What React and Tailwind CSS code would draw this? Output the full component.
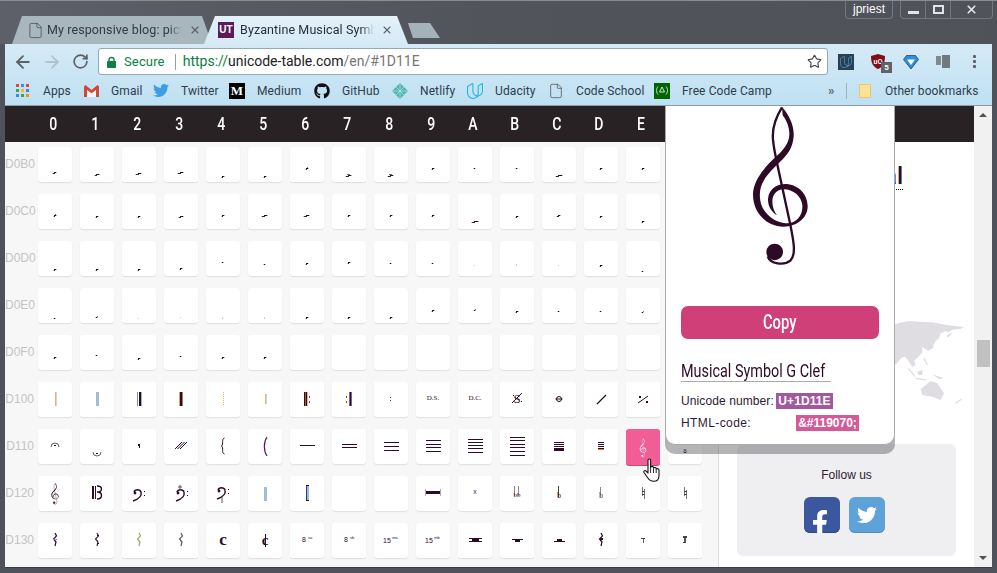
import React from 'react';
import { ArrowLeft, ArrowRight, RotateCw, Star, File, X } from 'lucide-react';
import { FaTwitter, FaGithub, FaFacebookF } from 'react-icons/fa';
import { SiUdacity } from 'react-icons/si';

const D = '#2d0b26';
const R = ({ x, y, w = 1, h = 1, c = D }) => <rect x={x} y={y} width={w} height={h} fill={c} shapeRendering="crispEdges" />;
const L = ({ d, w = 1, c = D, f = 'none' }) => <path d={d} stroke={c} strokeWidth={w} fill={f} />;
const T = ({ t, y = 19, s = 6, x = 17, b, serif = true, c = D }) => (
  <text x={x} y={y} textAnchor="middle" fontSize={s} fontWeight={b ? 700 : 400} fontFamily={serif ? '"Liberation Serif",serif' : '"Liberation Sans",sans-serif'} fill={c}>{t}</text>
);

function Clef({ color = D, x, y, width, height }) {
  return (
    <svg x={x} y={y} width={width} height={height} viewBox="380 14 200 490" className="block mx-auto">
      <path fill={color} d="M485 16C505 40 522 70 520 105C518 130 510 148 495 165C475 188 445 212 430 238C420 255 416 275 420 298C425 330 455 362 495 366C530 368 548 340 546 312C544 285 518 264 490 264C468 264 456 282 456 300C456 318 462 332 470 342C452 332 442 312 443 292C445 265 468 247 498 248C535 250 562 280 562 315C562 350 530 376 490 376C440 376 398 335 398 280C398 240 430 200 468 165C490 145 506 125 507 100C508 80 498 55 487 42L485 16Z" />
      <path fill="none" stroke={color} strokeWidth="7" d="M485 18C465 50 455 85 458 115C460 140 465 160 470 185L510 370C520 420 528 460 510 478C490 494 450 488 442 465" />
      <circle cx="463" cy="452" r="25" fill={color} />
    </svg>
  );
}

const dotRows = [
  [[25,5],[27,6],[26,7],[25,7],[29,3],[29,3],[21,4,3],[28,7,2],[28,7,2],[21,3],[21,2],[21,1],[28,8],[21,3],[21,3]],
  [[21,4,3],[22,3],[22,3],[22,6],[21,3],[21,7],[21,7],[21,3],[21,3],[21,4],[27,8],[22,3],[21,5],[22,3],[27,3]],
  [[28,3],[28,3],[28,4],[27,4],[21,2],[23,2],[22,3],[21,3],[22,2],[22,2],[24,2,1,1],[23,2,2,1],[24,2,1,1],[24,3],[30,2]],
  [[30,2],[29,2,2],[30,1,1,1],[29,1,1,1],[29,2,2,1],[29,2,2,1],[29,3],[29,3],[29,3],[22,3],[22,2,2],[23,3],[23,2],[23,2],[24,2,2]],
  [[22,3],[20,1],[23,3],[21,1],[22,3],[22,3]],
];

function Dot({ m }) {
  const [y, w0, h = 1, faint] = m;
  const w = w0 > 3 ? w0 - 2 : Math.max(1, w0 - 1);
  const x = Math.floor(17 - w / 2);
  if (faint) return <R x={x} y={y} w={w} h={h} c="#d9cdb8" />;
  const half = Math.ceil(w / 2);
  return (
    <>
      {w > 1 && <R x={x} y={y + 1} w={half} c="#3a2040" />}
      <R x={x + half - 1} y={y} w={w - half + 1} />
      {h > 1 && <R x={x + 1} y={y - 1} w={Math.max(1, w - 2)} c="#8a6a70" />}
      <R x={x - 1} y={y + (w > 1 ? 1 : 0)} c="#e8b898" />
      <R x={x + w} y={y} c="#9ab8ea" />
    </>
  );
}

const O = '#e9b36b', B = '#93bdea';
const g100 = [
  <><R x={17} y={10} h={14} c={O} /><R x={18} y={10} h={14} c="#c3d8ee" /></>,
  <><R x={16} y={10} h={14} c={B} /><R x={17} y={10} h={14} c="#c9b8a0" /><R x={18} y={10} h={14} c={B} /></>,
  <><R x={15} y={10} h={14} c="#8a8f6a" /><R x={17} y={10} w={2} h={14} /><R x={19} y={10} h={14} c="#8fb0e8" /></>,
  <><R x={15} y={10} h={14} c="#d9a878" /><R x={16} y={10} w={2} h={14} /><R x={18} y={10} h={14} c="#b07a50" /></>,
  <path d="M17.500 10V24" stroke={O} strokeDasharray="1 1" />,
  <><R x={17} y={12} h={10} c={O} /><R x={18} y={12} h={10} c="#c3d8ee" /></>,
  <><R x={14} y={10} h={14} /><R x={15} y={10} h={14} c="#9a5a3a" /><R x={16} y={10} h={14} /><R x={17} y={10} h={14} c={O} /><R x={19} y={14} h={2} c="#555" /><R x={19} y={19} h={2} c="#555" /></>,
  <><R x={14} y={14} h={2} c="#555" /><R x={14} y={19} h={2} c="#555" /><R x={17} y={10} h={14} c="#b4574a" /><R x={18} y={10} h={14} /><R x={19} y={10} h={14} c="#5a6ad0" /></>,
  <><R x={16} y={15} h={1} c="#555" /><R x={16} y={18} h={1} c="#555" /></>,
  <T t="D.S." y={18} s={7} />,
  <T t="D.C." y={18} s={7} />,
  <><T t="S" y={21} s={13} /><L d="M12 21L22 11" /><R x={13} y={13} c={D} /><R x={21} y={19} /></>,
  <><circle cx="17" cy="17" r="2.500" fill="none" stroke={D} /><L d="M13.500 17H20.500" /></>,
  <L d="M13 22L22 13" w={1.2} />,
  <><L d="M12 21L22 14" /><R x={13} y={14} w={2} h={2} /><R x={20} y={19} w={2} h={2} /></>,
];

const lines = (ys, x = 10, w = 15, h = 1) => <>{ys.map((y) => <R key={y} x={x} y={y} w={w} h={h} />)}</>;
const g110 = [
  <><L d="M13 18A4 4 0 0 1 21 18" c="#6a5868" /><R x={16} y={16} w={2} /></>,
  <><L d="M13 23A4 4 0 0 0 21 23" c="#6a5868" /><R x={16} y={24} w={2} /></>,
  <><R x={16} y={15} w={2} h={2} /><R x={17} y={17} h={2} /></>,
  <L d="M11 20L18 13M13.500 20L20.500 13M16 20L23 13" />,
  <L d="M18.500 9C15 10 18 15 15.500 17C18 19 15 24 18.500 25" c={D} />,
  <L d="M19 8C15.500 13 15.500 22 19 27" w={1.2} c="#5a1a5a" />,
  lines([16]), lines([15, 18]), lines([13, 17, 21]), lines([11, 15, 18, 22]), lines([10, 13, 16, 19, 23]), lines([8, 11, 15, 18, 22, 26]),
  <>{lines([13, 15, 17], 12, 10)}<R x={12} y={19} w={10} h={3} /></>,
  <>{lines([13, 15, 17, 19], 14, 6)}<R x={14} y={20} w={6} h={1} c="#e08a30" /></>,
  null,
  <><T t="8" y={24} s={7} /><R x={16} y={23} w={2} /></>,
];

const FClef = () => (
  <>
    <L d="M12 23C18 21 21 18 20 14C19 11 14 11 13 14" w={1.4} />
    <circle cx="14" cy="15" r="1.400" fill={D} />
    <R x={23} y={13} /><R x={23} y={17} />
  </>
);
const g120 = [
  <Clef x={12.5} y={7} width={9} height={22} />,
  <><R x={12} y={10} w={2} h={13} /><R x={15} y={10} h={13} /><L d="M17 10C23 10 23 16 17 16C23 16 23 23 17 23" w={1.4} /></>,
  <g transform="translate(-1 2)"><FClef /></g>,
  <g transform="translate(0 2)"><FClef /><L d="M16 7V12M14 9H18" c="#555" /></g>,
  <g transform="translate(-1 0)"><FClef /><L d="M17 21V27" c="#555" /></g>,
  <><R x={16} y={11} h={14} c={B} /><R x={17} y={11} h={14} c="#c9b8a0" /><R x={18} y={11} h={14} c={B} /></>,
  <><R x={16} y={9} h={15} c="#3a3a50" /><R x={17} y={9} w={2} h={15} c={B} /><R x={16} y={9} w={3} /><R x={16} y={24} w={3} /></>,
  null, null,
  <><R x={9} y={15} w={16} h={3} /><R x={9} y={13} h={7} c="#aaa" /><R x={24} y={13} h={7} c="#aaa" /></>,
  <T t="x" y={18} s={7} serif={false} c="#2a3a60" />,
  <><R x={14} y={10} h={10} c="#888" /><R x={18} y={10} h={10} c="#888" /><T t="bb" y={21} s={7} /></>,
  <><R x={16} y={10} h={11} c="#444" /><T t="b" y={22} s={8} /></>,
  <><R x={16} y={11} h={10} c="#888" /><T t="b" y={22} s={8} c="#4a4a70" /></>,
  <><L d="M16.500 11V20M18.500 13V23" c="#777" /><R x={16} y={15} w={3} c="#444" /><R x={16} y={18} w={3} c="#444" /></>,
  <><L d="M16.500 11V20M18.500 14V23" c="#777" /><R x={16} y={15} w={3} c="#444" /><R x={16} y={18} w={3} c="#444" /></>,
];

const Rest = ({ c = D, x = 17 }) => <L d={`M${x} 10L${x + 1.5} 13L${x - 1.5} 16L${x + 1} 19L${x} 23`} w={1.2} c={c} />;
const g130 = [
  <><Rest x={17} /><R x={15} y={16} w={4} c="#9a8ad0" /></>,
  <><Rest x={17} c="#3a2a50" /><R x={17} y={12} w={2} /><R x={17} y={20} w={2} /></>,
  <Rest x={17} c="#a8a468" />,
  <Rest x={17} c="#5a5a6a" />,
  <T t="c" y={22} s={17} b />,
  <><T t="c" y={22} s={15} b /><R x={17} y={11} h={13} /></>,
  <><T t="8" y={19} s={7} x={14} serif={false} /><T t="va" y={16} s={4} x={20} serif={false} /></>,
  <><T t="8" y={19} s={7} x={14} serif={false} /><T t="vb" y={16} s={4} x={20} serif={false} /></>,
  <><T t="15" y={20} s={7} x={13} serif={false} /><T t="ma" y={16} s={4} x={21} serif={false} /></>,
  <><T t="15" y={20} s={7} x={13} serif={false} /><T t="mb" y={16} s={4} x={21} serif={false} /></>,
  <><R x={11} y={15} w={13} h={1} /><R x={14} y={16} w={7} h={2} /><R x={11} y={18} w={13} h={1} /></>,
  <><R x={12} y={16} w={11} /><R x={15} y={17} w={5} h={2} /></>,
  <><R x={12} y={18} w={11} /><R x={15} y={16} w={5} h={2} /></>,
  <><Rest x={17} /><R x={16} y={15} w={3} h={2} /></>,
  <><R x={15} y={15} w={4} h={1} c="#444" /><R x={17} y={16} h={4} c="#666" /></>,
  <><R x={15} y={13} w={4} h={2} c="#444" /><R x={16} y={15} w={2} h={4} c="#555" /><R x={15} y={19} w={3} c="#444" /></>,
];

const labels = ['D0B0', 'D0C0', 'D0D0', 'D0E0', 'D0F0', 'D100', 'D110', 'D120', 'D130'];
const heads = ['0', '1', '2', '3', '4', '5', '6', '7', '8', '9', 'A', 'B', 'C', 'D', 'E'];

function Cell({ children, hot }) {
  if (hot) {
    return (
      <div className="w-[34px] h-[36px] -mb-px rounded-[3px] bg-[#f15e96] shadow-[0_1px_0_#c44a78]">
        <svg width="34" height="36"><Clef color="#fff" x={13} y={9} width={8} height={20} /></svg>
      </div>
    );
  }
  return (
    <div className="w-[34px] h-[35px] shrink-0 rounded-[3px] bg-white shadow-[0_1px_1px_#dfdfdf]">
      <svg width="34" height="35" className="block">{children}</svg>
    </div>
  );
}

function Grid() {
  const content = (r, c) => {
    if (r < 5) { const m = dotRows[r][c]; return m ? <Dot m={m} /> : null; }
    return [g100, g110, g120, g130][r - 5][c];
  };
  return (
    <div className="flex flex-col gap-3 pt-[5px]">
      {labels.map((l, r) => (
        <div key={l} className="flex items-center">
          <div className="w-[29px] mr-1 -mt-[2px] text-right text-[12px] text-[#c4c4c4] whitespace-nowrap font-['Liberation_Sans',sans-serif]">{l}</div>
          <div className="flex gap-2">
            {Array.from({ length: 16 }).map((_, c) => (
              <Cell key={c} hot={r === 6 && c === 14}>{content(r, c)}</Cell>
            ))}
          </div>
        </div>
      ))}
    </div>
  );
}

function Bookmark({ icon, label, w }) {
  return (
    <div className="flex items-center gap-3">
      <div className="w-4 h-4 flex items-center justify-center">{icon}</div>
      <span className={`text-[12px] tracking-[0.1px] whitespace-nowrap text-[#2f3d4c] ${w}`}>{label}</span>
    </div>
  );
}

const appColors = ['#ea4335', '#4285f4', '#ea4335', '#34a853', '#fbbc05', '#4285f4', '#4285f4', '#34a853', '#fb8c05'];

function Hand() {
  return (
    <svg width="18" height="24" viewBox="0 0 18 24" className="absolute left-[638px] top-[352px]">
      <path d="M5 2C5 .6 7.600 .6 7.600 2V9.500C8 8 10.500 8 10.500 9.700V10.300C11 9 13.200 9.300 13.200 10.800V11.300C13.800 10.300 16 10.500 16 12V17.500C16 20.500 14.500 23.300 11 23.300C7.500 23.300 6 22 4.500 19.500L1 14.500C.3 13.200 1.800 11.800 3.200 13.200L5 15Z" fill="#fff" stroke="#111" strokeWidth="1.1" strokeLinejoin="round" />
      <path d="M7.600 10V15M10.500 10.500V15M13.200 11.500V15" stroke="#111" strokeWidth=".9" />
    </svg>
  );
}

export default function App() {
  return (
    <div className="relative w-[997px] h-[573px] overflow-hidden flex flex-col bg-[#50525b] border-t border-[#8a8c92] font-['Roboto',sans-serif]">
      {/* title bar */}
      <div className="relative h-[43px] shrink-0 flex pl-3 bg-gradient-to-r from-[#5e6069] via-[#52545c] to-[#50525a]">
        <div className="flex items-end h-full">
          <div className="relative w-[200px] h-[28px] flex items-center pl-[15px] bg-[#a8b6be] [clip-path:polygon(10px_0,190px_0,200px_100%,0_100%)]">
            <File size={17} strokeWidth={1} className="text-[#444] shrink-0" />
            <span className="ml-[3px] w-[135px] whitespace-nowrap text-[12.5px] tracking-[0.1px] text-[#333a42] [mask-image:linear-gradient(to_right,black_90%,transparent)]">My responsive blog: pictu</span>
            <X size={12} strokeWidth={2.2} className="ml-[7px] text-[#55606a] shrink-0" />
          </div>
          <div className="relative -ml-2 w-[204px] h-[28px] flex items-center pl-[14px] bg-gradient-to-b from-[#e4f1f9] to-[#d6eaf6] [clip-path:polygon(11px_0,193px_0,204px_100%,0_100%)]">
            <div className="w-4 h-4 shrink-0 bg-[#5c1b58] text-white text-[10px] font-bold leading-4 text-center font-['Liberation_Sans',sans-serif]">UT</div>
            <span className="ml-[6px] w-[134px] whitespace-nowrap text-[12.5px] tracking-[0.1px] text-[#27303a] [mask-image:linear-gradient(to_right,black_90%,transparent)]">Byzantine Musical Symbo</span>
            <X size={12} strokeWidth={2.2} className="ml-[7px] text-[#5a6570] shrink-0" />
          </div>
          <div className="self-start mt-[22px] w-8 h-[15px] bg-[#a4b3bb] [clip-path:polygon(0_0,22px_0,32px_100%,5px_100%)]" />
        </div>
        <div className="ml-auto mr-[4px] flex items-start gap-[7px] text-white">
          <div className="w-[48px] h-[18px] border border-t-0 border-[#74767e] rounded-b-[4px] text-center text-[12px] leading-[17px] font-['Liberation_Sans',sans-serif]">jpriest</div>
          <div className="w-[93px] h-[18px] border border-t-0 border-[#74767e] rounded-b-[4px] flex">
            <div className="w-[25px] border-r border-[#74767e] flex items-end justify-center pb-[4px]"><div className="w-[11px] h-[3px] bg-[#e4e4e6]" /></div>
            <div className="w-[25px] border-r border-[#74767e] flex items-center justify-center"><div className="w-[11px] h-[9px] border-2 border-[#e4e4e6]" /></div>
            <div className="flex-1 flex items-center justify-center"><X size={13} strokeWidth={3.2} className="text-[#e4e4e6]" /></div>
          </div>
        </div>
      </div>

      <div className="mx-[5px] flex-1 flex flex-col min-h-0">
        {/* toolbar */}
        <div className="h-[62px] shrink-0 flex flex-col bg-gradient-to-b from-[#d6eaf6] to-[#bee0f3] border-b border-[#8a9ba6]">
          <div className="flex items-start pt-[4px] h-[31px] shrink-0">
            <div className="ml-[3px] w-[29px] h-[27px] flex items-center justify-center"><ArrowLeft size={20} strokeWidth={2.2} className="text-[#5d6166]" /></div>
            <div className="w-[29px] h-[27px] flex items-center justify-center"><ArrowRight size={20} strokeWidth={2.2} className="text-[#b3c2cc]" /></div>
            <div className="w-[29px] h-[27px] flex items-center justify-center"><RotateCw size={17} strokeWidth={2.4} className="text-[#5d6166]" /></div>
            <div className="ml-[3px] w-[730px] h-[27px] bg-white border border-[#93a9b6] rounded-[3px] flex items-center pl-[8px] pr-[5px]">
              <svg width="9" height="12" viewBox="0 0 9 12" className="shrink-0"><rect x="0" y="5" width="9" height="7" rx="1" fill="#0b8043" /><path d="M2 5.500V3.500C2 .8 7 .8 7 3.500V5.500" fill="none" stroke="#0b8043" strokeWidth="1.400" /></svg>
              <span className="ml-[8px] text-[13px] tracking-[0.15px] text-[#0b8043]">Secure</span>
              <div className="ml-[10px] w-px h-[16px] bg-[#9a9ea2]" />
              <span className="ml-[7px] text-[14px] whitespace-nowrap"><span className="text-[#0b8043]">https://</span><span className="text-[#222]">unicode-table.com</span><span className="text-[#777]">/en/#1D11E</span></span>
              <Star size={15} strokeWidth={1.8} className="ml-auto text-[#444]" />
            </div>
            <div className="ml-[2px] flex">
              <div className="w-[32px] h-[27px] flex items-center justify-center"><div className="w-4 h-4 bg-[#2c3e50] flex items-center justify-center"><SiUdacity size={12} className="text-[#3f8fbf]" /></div></div>
              <div className="w-[32px] h-[27px] relative flex items-center justify-center">
                <svg width="16" height="17" viewBox="0 0 16 17"><path d="M8 1L15 3C15 10 13 14 8 16C3 14 1 10 1 3Z" fill="#800f18" /><text x="8" y="10.500" textAnchor="middle" fontSize="6.500" fontWeight="700" fill="#fff" fontFamily="Liberation Sans">uO</text></svg>
                <div className="absolute left-[19px] top-[14px] w-[11px] h-[11px] bg-[#5f6368] text-white text-[8px] leading-[11px] text-center font-bold">5</div>
              </div>
              <div className="w-[33px] h-[27px] flex items-center justify-center">
                <svg width="16" height="16" viewBox="0 0 16 16"><path d="M3.500 1.500H12.500L15.500 5.500L8 15L.5 5.500Z" fill="#2b8fe0" stroke="#111e3a" strokeWidth=".6" /><path d="M4 5.500H12L8 11Z" fill="#fff" /></svg>
              </div>
              <div className="w-[31px] h-[27px] flex items-center justify-center gap-[1px]"><div className="w-[5px] h-[9px] mb-[3px] bg-[#7c8a90]" /><div className="w-[8px] h-[13px] bg-[#6f7a80]" /></div>
              <div className="w-[32px] h-[27px] flex flex-col items-center justify-center gap-[2px]">
                <div className="w-[3px] h-[3px] rounded-[1px] bg-[#5d6166]" /><div className="w-[3px] h-[3px] rounded-[1px] bg-[#5d6166]" /><div className="w-[3px] h-[3px] rounded-[1px] bg-[#5d6166]" />
              </div>
            </div>
          </div>
          <div className="flex-1 flex items-center pl-[11px] pt-[1px]">
            <div className="flex items-center gap-3">
              <div className="flex items-center gap-[14px]">
                <div className="grid grid-cols-3 gap-[2px] w-[13px]">{appColors.map((c, i) => <div key={i} className="w-[3px] h-[3px]" style={{ background: c }} />)}</div>
                <span className="text-[12px] tracking-[0.1px] text-[#2f3d4c] w-[28px] whitespace-nowrap">Apps</span>
              </div>
              <Bookmark w="w-[30px]" label="Gmail" icon={<svg width="15" height="12" viewBox="0 0 15 12"><path d="M0 1.500V12H3V5L7.500 8.500L12 5V12H15V1.500L13.500 0L7.500 5L1.500 0Z" fill="#d14836" /><path d="M3 5V12H12V5L7.500 8.500Z" fill="#f4f4f4" /></svg>} />
              <Bookmark w="w-[36px]" label="Twitter" icon={<FaTwitter size={17} className="text-[#3a9fe6]" />} />
              <Bookmark w="w-[45px]" label="Medium" icon={<div className="w-4 h-4 bg-black text-white text-[13px] leading-4 text-center font-bold font-['Liberation_Serif',serif]">M</div>} />
              <Bookmark w="w-[38px]" label="GitHub" icon={<FaGithub size={16} className="text-[#111]" />} />
              <Bookmark w="w-[35px]" label="Netlify" icon={<svg width="16" height="16" viewBox="0 0 16 16"><path d="M8 0L16 8L8 16L0 8Z" fill="#4fb3b0" /><path d="M4 4L12 12M12 4L4 12M8 0V16M0 8H16" stroke="#bfe6e4" strokeWidth=".7" /></svg>} />
              <Bookmark w="w-[41px]" label="Udacity" icon={<SiUdacity size={16} className="text-[#18b8e0]" />} />
              <Bookmark w="w-[66px]" label="Code School" icon={<File size={16} strokeWidth={1.2} className="text-[#555]" />} />
              <Bookmark w="w-[88px]" label="Free Code Camp" icon={<div className="w-4 h-4 bg-[#006400] flex items-center justify-center"><svg width="12" height="9" viewBox="0 0 12 9"><path d="M2 .5C0 3 0 6 2 8.500M10 .5C12 3 12 6 10 8.500M6 1L8.500 6H3.500Z" stroke="#cfe8cf" strokeWidth="1" fill="none" /></svg></div>} />
            </div>
            <span className="ml-[58px] w-[8px] text-[13px] font-bold text-[#5d6a74] leading-none">»</span>
            <div className="ml-[10px] w-px h-[16px] bg-[#9fb3bf]" />
            <div className="ml-[12px] w-[12px] h-[14px] bg-[#fde293] border border-[#e8c66a] rounded-[1px]" />
            <span className="ml-[14px] text-[12px] tracking-[0.1px] text-[#2f3d4c] whitespace-nowrap">Other bookmarks</span>
          </div>
        </div>

        {/* page */}
        <div className="relative flex-1 min-h-0 flex overflow-hidden border-b border-[#3c3d43] mb-[5px]">
          <div className="flex-1 min-w-0 flex flex-col bg-white">
            <div className="h-[36px] shrink-0 bg-[#282225] flex pl-[27px]">
              {heads.map((h) => (
                <div key={h} className="w-[42px] text-center text-white text-[18px] font-medium leading-[36px]">
                  <span className="inline-block scale-x-[0.78]">{h}</span>
                </div>
              ))}
            </div>
            <div className="flex-1 min-h-0 flex">
              <div className="w-[714px] shrink-0 bg-[#f7f7f7] border-r border-[#dddddd]"><Grid /></div>
              <div className="flex-1 min-w-0 bg-white flex flex-col">
                <div className="ml-[18px] w-[166px] h-[26px] mt-[22px] text-right text-[24px] font-medium leading-[24px] text-[#2d0b26] border-b border-dotted border-black whitespace-nowrap">Global</div>
                <svg width="85" height="95" viewBox="0 0 255 285" className="ml-auto mt-[125px] shrink-0" fill="#dfdde2">
                  <path d="M14 30L30 24L60 18L90 20L130 22L160 28L190 32L225 36L215 42L190 44L178 52L170 48L155 55L150 70L140 78L130 95L118 108L105 100L100 95L100 112L88 125L75 138L80 150L70 155L60 140L48 125L38 128L28 140L18 150L14 150Z" />
                  <path d="M192 50L178 68L172 62ZM85 170L100 165L100 180L88 180ZM130 178L165 190L150 192ZM95 222L125 198L145 205L165 235L155 255L130 245L100 240ZM120 85L135 95L125 105Z" />
                  <path d="M58 160L78 185M80 190L110 195M105 130L115 150M200 265L218 252" stroke="#dfdde2" strokeWidth="4" fill="none" />
                </svg>
                <div className="mx-[18px] mt-[34px] h-[112px] rounded-[6px] bg-[#efeef1] flex flex-col items-center">
                  <div className="mt-[23px] text-[12px] leading-4 text-[#2d2033] font-['Liberation_Sans',sans-serif]">Follow us</div>
                  <div className="mt-[14px] -ml-[4px] flex gap-[9px]">
                    <div className="w-9 h-9 rounded-[6px] bg-[#3b579d] shadow-[inset_0_-1px_0_#2f4680] overflow-hidden flex items-end justify-end pr-[7px]"><FaFacebookF size={26} className="text-white -mb-[3px]" /></div>
                    <div className="w-9 h-9 rounded-[6px] bg-[#5da3da] shadow-[inset_0_-1px_0_#4b8fc4] flex items-center justify-center"><FaTwitter size={20} className="text-white" /></div>
                  </div>
                </div>
              </div>
            </div>
          </div>
          {/* scrollbar */}
          <div className="w-[18px] shrink-0 bg-[#f1f1f1] flex flex-col items-center justify-between py-[7px]">
            <div className="w-0 h-0 border-x-[4px] border-x-transparent border-b-[4px] border-b-[#505050]" />
            <div className="w-0 h-0 border-x-[4px] border-x-transparent border-t-[4px] border-t-[#505050]" />
          </div>
          <div className="absolute left-[972px] top-[234px] w-[13px] h-[27px] bg-[#c1c1c1]" />

          {/* popup */}
          <div className="absolute left-[660px] top-0 w-[230px] h-[339px] bg-white border-x border-b border-[#aaaaaa] rounded-b-[10px] shadow-[0_9px_0_rgba(90,88,95,0.45)] px-[15px] flex flex-col">
            <Clef width={66.7} height={163.3} />
            <div className="mt-[37px] h-[33px] shrink-0 rounded-[7px] bg-[#cf3f78] text-white text-[20px] font-medium leading-[33px] text-center"><span className="inline-block scale-x-[0.74]">Copy</span></div>
            <div className="mt-[19px] h-[24px] w-[150px] border-b border-[#aaaaaa] text-[18px] leading-[25px] text-[#2d0b26] whitespace-nowrap"><span className="inline-block origin-left scale-x-[0.8]">Musical Symbol G Clef</span></div>
            <div className="mt-[11px] flex items-center h-[16px] text-[12px] tracking-[0.1px] whitespace-nowrap text-[#2d1a33] font-['Liberation_Sans',sans-serif]">
              <span className="w-[95px]">Unicode number:</span>
              <span className="w-[57px] h-[16px] bg-[#a2589f] text-white font-bold text-[12px] leading-[16px] text-center">U+1D11E</span>
            </div>
            <div className="mt-[6px] flex items-center h-[16px] text-[12px] tracking-[0.4px] whitespace-nowrap text-[#2d1a33] font-['Liberation_Sans',sans-serif]">
              <span className="w-[115px]">HTML-code:</span>
              <span className="w-[63px] h-[16px] bg-[#d45a97] text-white font-bold text-[12px] leading-[16px] text-center tracking-normal">&amp;#119070;</span>
            </div>
          </div>
          <Hand />
        </div>
      </div>
    </div>
  );
}
